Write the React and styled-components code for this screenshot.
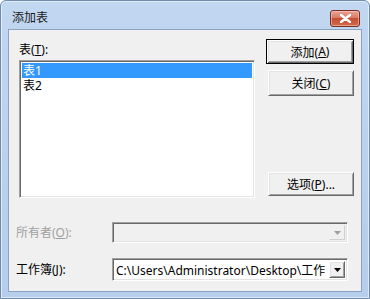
import React from "react";
import styled, { createGlobalStyle } from "styled-components";

const Global = createGlobalStyle`
  html, body {
    margin: 0;
    padding: 0;
    background: #ffffff;
  }
  body {
    font-family: "Noto Sans", "Noto Sans CJK SC", sans-serif;
    font-size: 12px;
    color: #000;
  }
`;

const Window = styled.div`
  width: 370px;
  height: 299px;
  box-sizing: border-box;
  display: flex;
  flex-direction: column;
  border: 1px solid #6d8cb0;
  border-radius: 6px 6px 0 0;
  background: linear-gradient(to bottom, #c2d7f0 0%, #bcd2ee 40%, #b6cdeb 100%);
  box-shadow: inset 0 0 0 1px rgba(255, 255, 255, 0.55);
  overflow: hidden;
`;

const TitleBar = styled.div`
  height: 28px;
  display: flex;
  align-items: center;
  padding: 0 9px 0 11px;
  flex-shrink: 0;
`;

const Title = styled.span`
  flex: 1;
  font-size: 12px;
  color: #1a1a1a;
  margin-top: 3px;
`;

const CloseButton = styled.div`
  width: 30px;
  height: 17px;
  margin-top: 6px;
  box-sizing: border-box;
  border: 1px solid #7a2b22;
  border-radius: 3px;
  background: linear-gradient(to bottom, #e8a493 0%, #d77c66 45%, #c54f34 50%, #d1694a 100%);
  box-shadow: inset 0 0 0 1px rgba(255, 220, 210, 0.5);
  display: flex;
  align-items: center;
  justify-content: center;
`;

const Client = styled.div`
  flex: 1;
  margin: 0 7px 6px 7px;
  background: #f0f0f0;
  border: 1px solid #8aa3c2;
  padding: 9px 7px 0 10px;
  display: flex;
  flex-direction: column;
`;

const TopSection = styled.div`
  display: flex;
`;

const LeftCol = styled.div`
  width: 236px;
  display: flex;
  flex-direction: column;
  padding-top: 3px;
`;

const Label = styled.span`
  line-height: 16px;
  height: 16px;
  color: ${p => (p.disabled ? "#a0a0a0" : "#000")};
  white-space: nowrap;
`;

const Key = styled.span`
  text-decoration: underline;
  text-underline-offset: 1px;
`;

const Sunken = styled.div`
  box-sizing: border-box;
  border-style: solid;
  border-width: 1px;
  border-color: #a0a0a0 #ffffff #ffffff #a0a0a0;
  box-shadow: inset 1px 1px 0 #696969, inset -1px -1px 0 #e3e3e3;
  background: ${p => (p.disabled ? "#f0f0f0" : "#ffffff")};
`;

const ListBox = styled(Sunken)`
  margin-top: 2px;
  height: 138px;
  padding: 2px;
`;

const ListItem = styled.div`
  height: 15px;
  line-height: 15px;
  padding-left: 1px;
  overflow: hidden;
  background: ${p => (p.selected ? "#3399ff" : "transparent")};
  color: ${p => (p.selected ? "#ffffff" : "#000")};
`;

const RightCol = styled.div`
  margin-left: auto;
  width: 88px;
  display: flex;
  flex-direction: column;
  gap: 6px;
  padding-bottom: 2px;
`;

const Button = styled.div`
  box-sizing: border-box;
  height: ${p => p.h || 25}px;
  margin-left: ${p => p.shift || 0}px;
  margin-top: ${p => (p.bottom ? "auto" : "0")};
  display: flex;
  align-items: center;
  justify-content: center;
  background: #f0f0f0;
  border-style: solid;
  border-width: 1px;
  border-color: ${p => (p.primary ? "#000 #000 #000 #000" : "#ffffff #696969 #696969 #ffffff")};
  box-shadow: ${p =>
    p.primary
      ? "inset 1px 1px 0 #ffffff, inset -1px -1px 0 #696969, inset 2px 2px 0 #e3e3e3, inset -2px -2px 0 #a0a0a0"
      : "inset 1px 1px 0 #e3e3e3, inset -1px -1px 0 #a0a0a0"};
  white-space: nowrap;
`;

const FieldRow = styled.div`
  display: flex;
  align-items: center;
  margin-left: -3px;
  margin-top: ${p => p.gap}px;
`;

const FieldLabel = styled(Label)`
  width: 96px;
`;

const Combo = styled(Sunken)`
  width: 236px;
  height: ${p => p.h}px;
  display: flex;
  align-items: center;
  padding: 2px;
  overflow: hidden;
`;

const ComboText = styled.span`
  flex: 1;
  min-width: 0;
  overflow: hidden;
  white-space: nowrap;
  padding-left: 1px;
`;

const ArrowButton = styled.div`
  width: 16px;
  align-self: stretch;
  flex-shrink: 0;
  box-sizing: border-box;
  display: flex;
  align-items: center;
  justify-content: center;
  background: #f0f0f0;
  border-style: solid;
  border-width: 1px;
  border-color: ${p => (p.disabled ? "#f0f0f0 #d0d0d0 #d0d0d0 #f0f0f0" : "#ffffff #696969 #696969 #ffffff")};
  box-shadow: ${p => (p.disabled ? "none" : "inset 1px 1px 0 #e3e3e3, inset -1px -1px 0 #a0a0a0")};
`;

const Arrow = ({ color }) => (
  <svg width="7" height="4" viewBox="0 0 7 4">
    <path d="M0 0h7L3.5 4z" fill={color} />
  </svg>
);

export default function App() {
  return (
    <>
      <Global />
      <Window>
        <TitleBar>
          <Title>添加表</Title>
          <CloseButton>
            <svg width="11" height="9" viewBox="0 0 11 9">
              <path
                d="M1 1l9 7M10 1l-9 7"
                stroke="#ffffff"
                strokeWidth="2.4"
                strokeLinecap="round"
              />
            </svg>
          </CloseButton>
        </TitleBar>
        <Client>
          <TopSection>
            <LeftCol>
              <Label>
                表(<Key>T</Key>):
              </Label>
              <ListBox>
                <ListItem selected>表1</ListItem>
                <ListItem>表2</ListItem>
              </ListBox>
            </LeftCol>
            <RightCol>
              <Button primary>
                添加(<Key>A</Key>)
              </Button>
              <Button h={26} shift={2}>
                关闭(<Key>C</Key>)
              </Button>
              <Button bottom shift={2} h={24}>
                选项(<Key>P</Key>)...
              </Button>
            </RightCol>
          </TopSection>
          <FieldRow gap={24}>
            <FieldLabel disabled>
              所有者(<Key>O</Key>):
            </FieldLabel>
            <Combo disabled h={21}>
              <ComboText />
              <ArrowButton disabled>
                <Arrow color="#a0a0a0" />
              </ArrowButton>
            </Combo>
          </FieldRow>
          <FieldRow gap={15}>
            <FieldLabel>
              工作簿(<Key>J</Key>):
            </FieldLabel>
            <Combo h={23}>
              <ComboText>C:\Users\Administrator\Desktop\工作</ComboText>
              <ArrowButton>
                <Arrow color="#000" />
              </ArrowButton>
            </Combo>
          </FieldRow>
        </Client>
      </Window>
    </>
  );
}
